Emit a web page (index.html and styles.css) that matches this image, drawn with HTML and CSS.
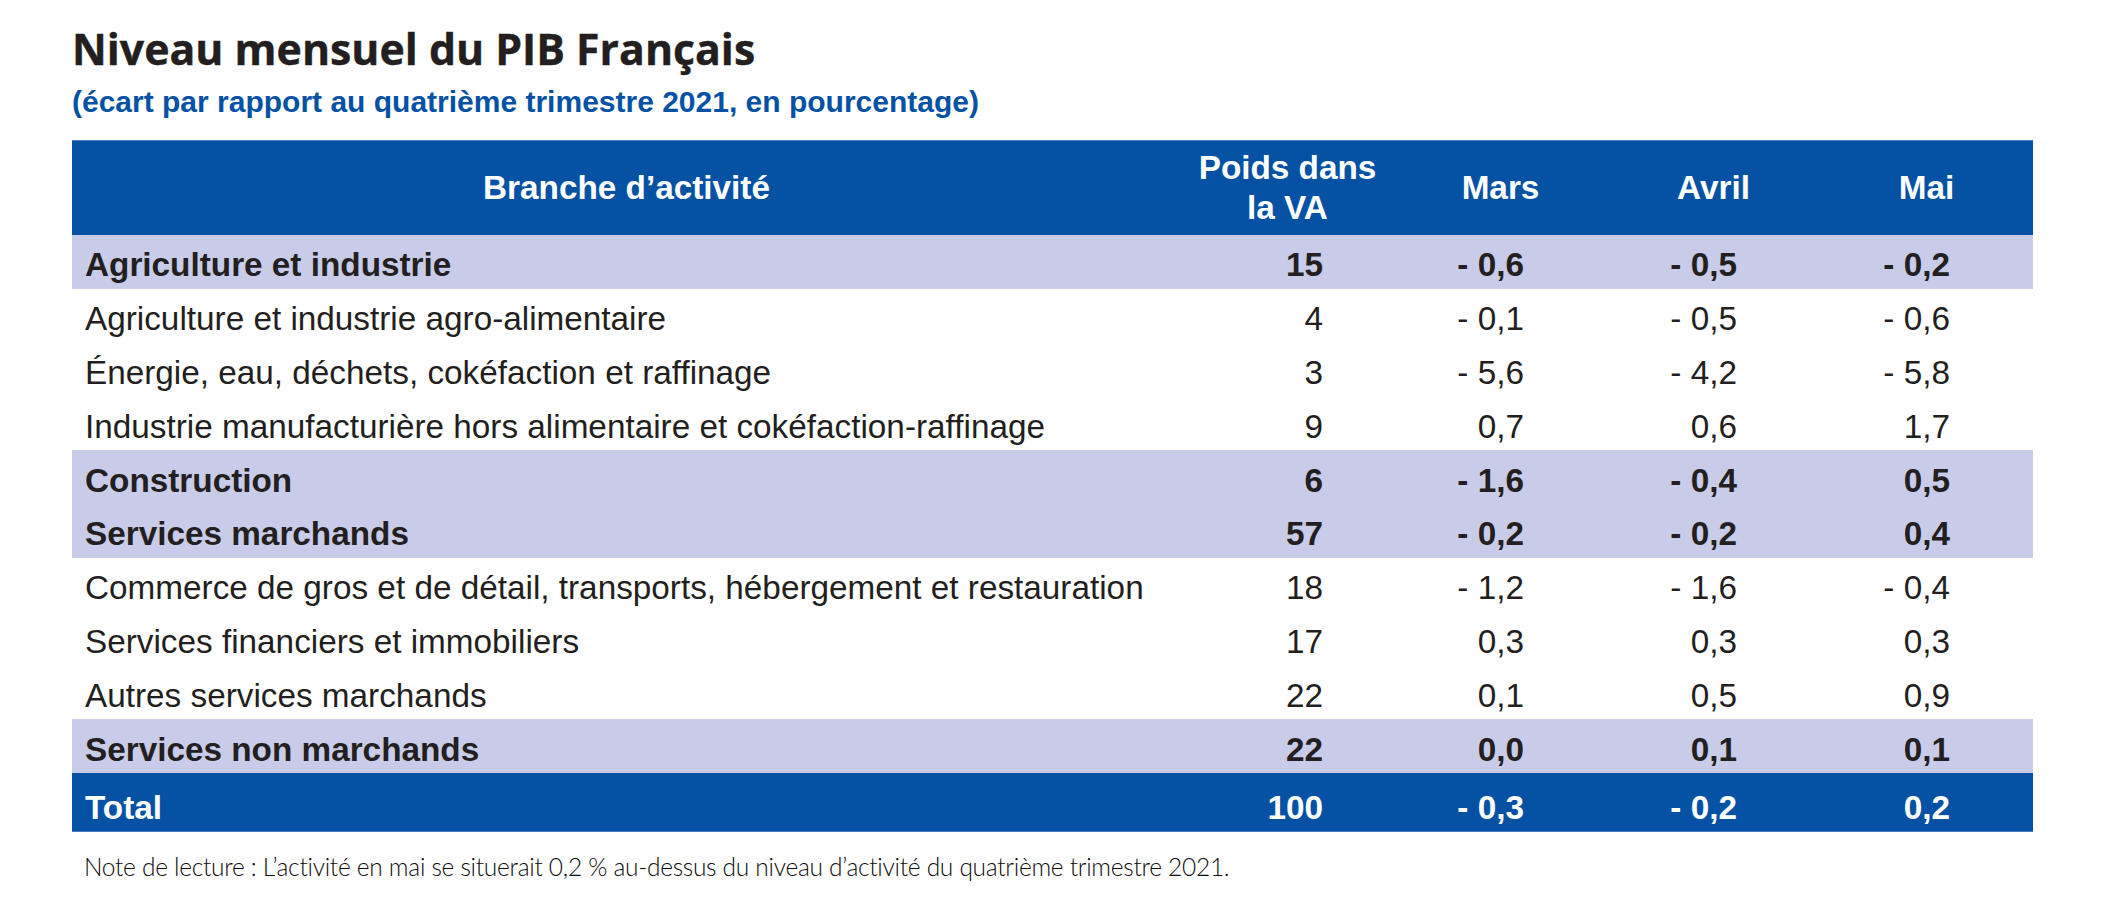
FILE: index.html
```html
<!DOCTYPE html>
<html lang="fr">
<head>
<meta charset="utf-8">
<title>Niveau mensuel du PIB Français</title>
<link rel="stylesheet" href="styles.css">
</head>
<body>
<div class="page">
  <h1 class="title">Niveau mensuel du PIB Français</h1>
  <p class="subtitle">(écart par rapport au quatrième trimestre 2021, en pourcentage)</p>
  <table class="pib">
    <colgroup>
      <col class="c-label">
      <col class="c-num">
      <col class="c-num">
      <col class="c-num">
      <col class="c-num">
    </colgroup>
    <thead>
      <tr class="head">
        <th>Branche d’activité</th>
        <th>Poids dans<br>la VA</th>
        <th>Mars</th>
        <th>Avril</th>
        <th>Mai</th>
      </tr>
    </thead>
    <tbody>
      <tr class="group"><td class="lbl">Agriculture et industrie</td><td class="w">15</td><td>- 0,6</td><td>- 0,5</td><td>- 0,2</td></tr>
      <tr><td class="lbl">Agriculture et industrie agro-alimentaire</td><td class="w">4</td><td>- 0,1</td><td>- 0,5</td><td>- 0,6</td></tr>
      <tr><td class="lbl">Énergie, eau, déchets, cokéfaction et raffinage</td><td class="w">3</td><td>- 5,6</td><td>- 4,2</td><td>- 5,8</td></tr>
      <tr><td class="lbl">Industrie manufacturière hors alimentaire et cokéfaction-raffinage</td><td class="w">9</td><td>0,7</td><td>0,6</td><td>1,7</td></tr>
      <tr class="group"><td class="lbl">Construction</td><td class="w">6</td><td>- 1,6</td><td>- 0,4</td><td>0,5</td></tr>
      <tr class="group"><td class="lbl">Services marchands</td><td class="w">57</td><td>- 0,2</td><td>- 0,2</td><td>0,4</td></tr>
      <tr><td class="lbl">Commerce de gros et de détail, transports, hébergement et restauration</td><td class="w">18</td><td>- 1,2</td><td>- 1,6</td><td>- 0,4</td></tr>
      <tr><td class="lbl">Services financiers et immobiliers</td><td class="w">17</td><td>0,3</td><td>0,3</td><td>0,3</td></tr>
      <tr><td class="lbl">Autres services marchands</td><td class="w">22</td><td>0,1</td><td>0,5</td><td>0,9</td></tr>
      <tr class="group"><td class="lbl">Services non marchands</td><td class="w">22</td><td>0,0</td><td>0,1</td><td>0,1</td></tr>
      <tr class="total"><td class="lbl">Total</td><td class="w">100</td><td>- 0,3</td><td>- 0,2</td><td>0,2</td></tr>
    </tbody>
  </table>
  <p class="note">Note de lecture : L’activité en mai se situerait 0,2 % au-dessus du niveau d’activité du quatrième trimestre 2021.</p>
</div>
</body>
</html>
```

FILE: styles.css
```css
html, body {
  margin: 0;
  padding: 0;
  background: #ffffff;
}

.page {
  padding: 28px 0 0 72px;
  color: #231f20;
}

.title {
  margin: 0;
  font-family: "Open Sans", "Noto Sans", sans-serif;
  font-weight: 700;
  font-size: 42.8px;
  line-height: 42px;
  letter-spacing: 0;
  color: #231f20;
  -webkit-text-stroke: 0.4px #231f20;
}

.subtitle {
  margin: 17px 0 0 0;
  font-family: "Liberation Sans", Arial, sans-serif;
  font-weight: 700;
  font-size: 30px;
  line-height: 30px;
  color: #0552a5;
}

.pib {
  margin-top: 23px;
  width: 1961px;
  border-collapse: collapse;
  table-layout: fixed;
  font-family: "Liberation Sans", Arial, sans-serif;
  font-size: 33.3px;
  color: #231f20;
}

.c-label { width: 1109px; }
.c-num { width: 213px; }

.pib th,
.pib td {
  padding: 0;
  white-space: nowrap;
}

.head {
  height: 95px;
  background: #0552a5;
  color: #ffffff;
  box-shadow: inset 0 1px 0 #4f80c2;
}

.head th {
  font-weight: 700;
  line-height: 40px;
  text-align: center;
  vertical-align: middle;
}

.pib tbody tr {
  height: 53.8px;
}

.pib tbody td {
  padding-top: 7px;
  line-height: 38px;
  vertical-align: middle;
  text-align: right;
  padding-right: 83px;
}

.pib tbody td.w {
  padding-right: 71px;
}

.pib tbody td.lbl {
  text-align: left;
  padding-left: 13px;
  padding-right: 0;
}

.group {
  background: #c8cce8;
  font-weight: 700;
}

.pib tbody tr.total {
  height: 59px;
  background: #0552a5;
  color: #ffffff;
  font-weight: 700;
}

.pib tbody tr.total td {
  padding-top: 12px;
  border-bottom: 1px solid #4a7cc0;
}

.note {
  margin: 20px 0 0 12px;
  font-family: Lato, "Open Sans", sans-serif;
  font-weight: 300;
  font-size: 24.5px;
  line-height: 30px;
  letter-spacing: -0.28px;
  color: #0d0b0c;
}
```
